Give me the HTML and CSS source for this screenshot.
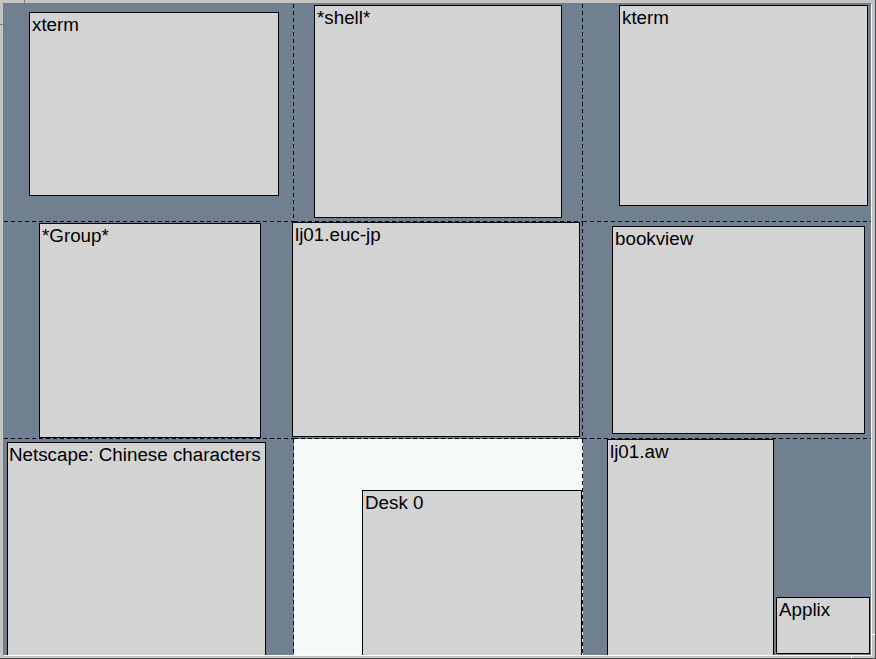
FILE: index.html
```html
<!DOCTYPE html>
<html>
<head>
<meta charset="utf-8">
<title>FvwmPager</title>
<link rel="stylesheet" href="styles.css">
</head>
<body>
<div class="frame">
  <span class="tick tick-top"></span>
  <span class="tick tick-left"></span>
  <span class="tick tick-bottom"></span>
  <span class="tick tick-right"></span>
  <div class="bevel">
    <div class="pager">
      <div class="grid">
        <div class="cell vr hb"></div>
        <div class="cell vr hb"></div>
        <div class="cell hb"></div>
        <div class="cell vr hb"></div>
        <div class="cell vr hb"></div>
        <div class="cell hb"></div>
        <div class="cell vr"></div>
        <div class="cell vr current"></div>
        <div class="cell"></div>
      </div>
      <div class="win w-xterm">xterm</div>
      <div class="win w-shell">*shell*</div>
      <div class="win w-kterm">kterm</div>
      <div class="win w-group">*Group*</div>
      <div class="win w-eucjp">lj01.euc-jp</div>
      <div class="win w-bookview">bookview</div>
      <div class="win w-netscape">Netscape: Chinese characters</div>
      <div class="win w-desk">Desk 0</div>
      <div class="win w-aw">lj01.aw</div>
      <div class="win w-applix">Applix</div>
    </div>
  </div>
</div>
</body>
</html>
```

FILE: styles.css
```css
html, body {
  margin: 0;
  padding: 0;
  background: #c4c4c4;
}

.frame {
  position: relative;
  width: 876px;
  height: 659px;
  box-sizing: border-box;
  background: #c4c4c4;
  padding: 3px 3px 2px 3px;
  border-right: 1px solid #4a4a4a;
  border-bottom: 1px solid #4a4a4a;
}

.tick {
  position: absolute;
  display: block;
}
.tick-top { left: 24px; top: 0; width: 1px; height: 4px; background: #7a7a7a; }
.tick-left { left: 0; top: 24px; width: 4px; height: 1px; background: #7a7a7a; }
.tick-bottom { left: 851px; top: 655px; width: 1px; height: 3px; background: #ffffff; }
.tick-right { left: 871px; top: 634px; width: 4px; height: 1px; background: #ffffff; }

.bevel {
  width: 100%;
  height: 100%;
  box-sizing: border-box;
  border-top: 1px solid #7a7a7a;
  border-left: 1px solid #7a7a7a;
  border-right: 1px solid #ffffff;
  border-bottom: 1px solid #ffffff;
}

.pager {
  position: relative;
  width: 867px;
  height: 651px;
  overflow: hidden;
  background: #708090;
}

.grid {
  display: grid;
  grid-template-columns: 290px 289px 288px;
  grid-template-rows: 218px 217px 216px;
  width: 100%;
  height: 100%;
}

.cell {
  background-repeat: no-repeat;
}
.cell.vr {
  background-image: repeating-linear-gradient(180deg, #000 0 4px, transparent 4px 7px);
  background-size: 1px 100%;
  background-position: right top;
}
.cell.hb {
  background-image: repeating-linear-gradient(90deg, #000 0 4px, transparent 4px 7px);
  background-size: 100% 1px;
  background-position: left bottom;
}
.cell.vr.hb {
  background-image:
    repeating-linear-gradient(180deg, #000 0 4px, transparent 4px 7px),
    repeating-linear-gradient(90deg, #000 0 4px, transparent 4px 7px);
  background-size: 1px 100%, 100% 1px;
  background-position: right top, left bottom;
}
.cell.current {
  background-color: #f5fbf8;
}

.win {
  position: absolute;
  box-sizing: border-box;
  border: 1px solid #000;
  background: #d3d3d3;
  color: #000;
  font-family: "Liberation Sans", Arial, sans-serif;
  font-size: 18.8px;
  line-height: 21px;
  padding: 1px 0 0 2px;
  white-space: nowrap;
  overflow: hidden;
}

.w-xterm    { left: 25px;  top: 8px;   width: 250px; height: 184px; }
.w-shell    { left: 310px; top: 1px;   width: 248px; height: 213px; }
.w-kterm    { left: 615px; top: 1px;   width: 249px; height: 201px; }
.w-group    { left: 35px;  top: 219px; width: 222px; height: 215px; }
.w-eucjp    { left: 288px; top: 218px; width: 288px; height: 215px; }
.w-bookview { left: 608px; top: 222px; width: 253px; height: 208px; }
.w-netscape { left: 3px;   top: 438px; width: 259px; height: 240px; padding-left: 1px; }
.w-desk     { left: 358px; top: 486px; width: 220px; height: 200px; }
.w-aw       { left: 603px; top: 435px; width: 167px; height: 240px; }
.w-applix   { left: 772px; top: 593px; width: 94px;  height: 57px; }
```
